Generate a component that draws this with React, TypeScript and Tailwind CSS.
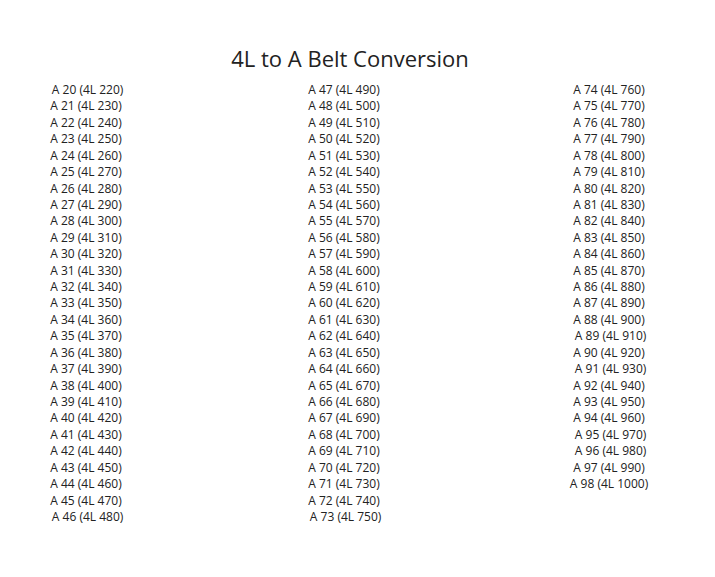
const shifted = new Set([20, 46, 73, 89, 91, 95, 96]);

function range(from: number, to: number) {
  const out: number[] = [];
  for (let n = from; n <= to; n++) out.push(n);
  return out;
}

const columns = [
  { width: 'w-[172px]', items: range(20, 46) },
  { width: 'w-[344px]', items: range(47, 73) },
  { width: 'w-[186px]', items: range(74, 98) },
];

export default function App() {
  return (
    <div className="w-[715px] h-[577px] bg-white text-[#222] font-['Open_Sans',sans-serif] pt-[43px]">
      <h1 className="text-center text-[22px] leading-[30px] pl-[0px] w-[700px]">4L to A Belt Conversion</h1>

      <div className="flex mt-[9px]">
        {columns.map((col, i) => (
          <div key={i} className={`${col.width} flex flex-col`}>
            {col.items.map((a) => (
              <div key={a} className="text-center text-[12px] leading-[16.42px] whitespace-pre">
                {shifted.has(a) ? ' ' : ''}A {a} (4L {a * 10 + 20})
              </div>
            ))}
          </div>
        ))}
      </div>
    </div>
  );
}
